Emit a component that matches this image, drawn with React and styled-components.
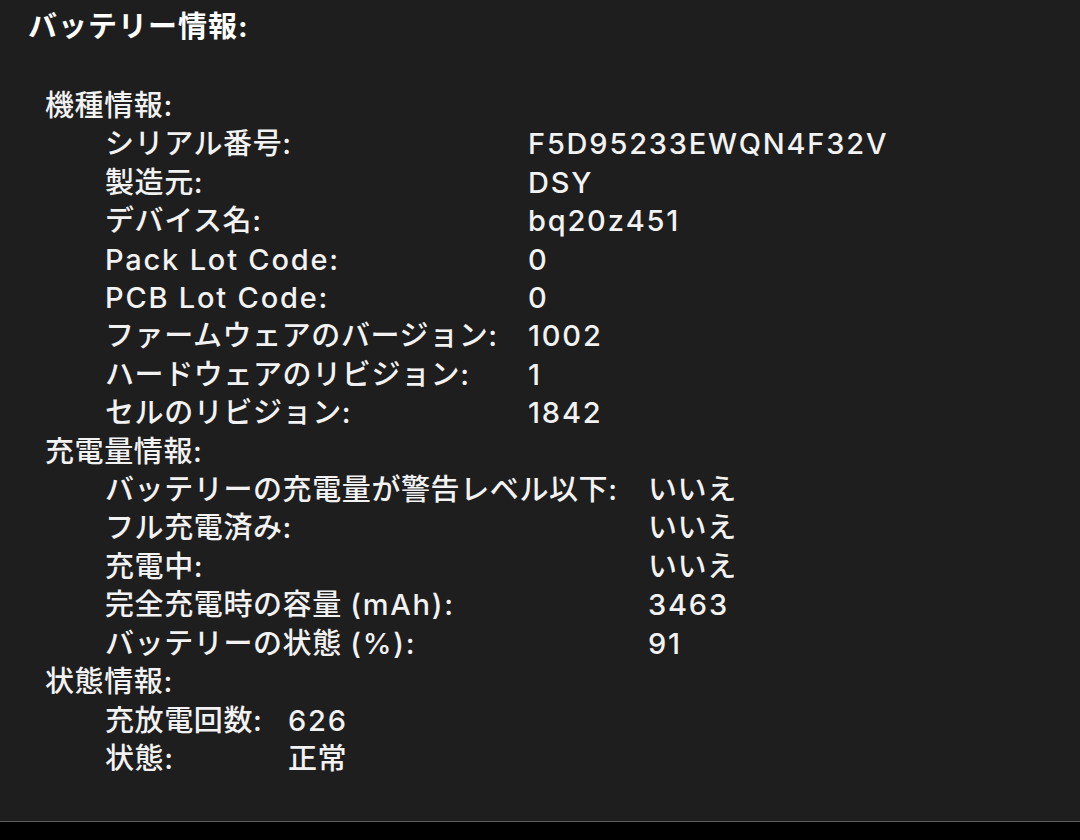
import React from "react";
import styled, { createGlobalStyle } from "styled-components";

const GlobalStyle = createGlobalStyle`
  html, body {
    margin: 0;
    padding: 0;
    background: #1e1e1e;
  }
  body {
    font-family: Inter, "Noto Sans CJK JP", sans-serif;
    color: #f2f2f2;
  }
`;

const sections = [
  {
    title: "機種情報:",
    labelWidth: 423,
    rows: [
      ["シリアル番号:", "F5D95233EWQN4F32V"],
      ["製造元:", "DSY"],
      ["デバイス名:", "bq20z451"],
      ["Pack Lot Code:", "0"],
      ["PCB Lot Code:", "0"],
      ["ファームウェアのバージョン:", "1002"],
      ["ハードウェアのリビジョン:", "1"],
      ["セルのリビジョン:", "1842"],
    ],
  },
  {
    title: "充電量情報:",
    labelWidth: 543,
    rows: [
      ["バッテリーの充電量が警告レベル以下:", "いいえ"],
      ["フル充電済み:", "いいえ"],
      ["充電中:", "いいえ"],
      ["完全充電時の容量 (mAh):", "3463"],
      ["バッテリーの状態 (%):", "91"],
    ],
  },
  {
    title: "状態情報:",
    labelWidth: 183,
    rows: [
      ["充放電回数:", "626"],
      ["状態:", "正常"],
    ],
  },
];

const Screen = styled.div`
  width: 1080px;
  height: 840px;
  display: flex;
  flex-direction: column;
  overflow: hidden;
`;

const Panel = styled.main`
  flex: 1;
  padding: 8px 0 0 28px;
  background: #1e1e1e;
  border-bottom: 1px solid #5c5c5c;
`;

const BottomBar = styled.div`
  height: 18px;
  background: #000;
`;

const Title = styled.h1`
  margin: 0 0 41px;
  font-size: 29px;
  line-height: 38px;
  font-weight: 700;
  letter-spacing: 1px;
  color: #fff;
`;

const Section = styled.section`
  margin-left: 17px;
`;

const SectionTitle = styled.div`
  font-size: 29px;
  line-height: 38.4px;
  font-weight: 500;
  letter-spacing: 0.6px;
`;

const Rows = styled.div`
  display: grid;
  grid-template-columns: ${({ $labelWidth }) => $labelWidth}px auto;
  justify-content: start;
  padding-left: 60px;
  font-size: 29px;
  line-height: 38.4px;
  font-weight: 500;
`;

const Cell = styled.div`
  white-space: nowrap;
  letter-spacing: 0.6px;
`;

const LatinRun = styled.span`
  letter-spacing: 1.8px;
`;

// wrap runs of ascii text so they get the wider tracking of the original font
const Text = ({ children }) =>
  children
    .split(/([\x21-\x7e](?:[\x20-\x7e]*[\x21-\x7e])?)/)
    .map((part, i) =>
      i % 2 ? <LatinRun key={i}>{part}</LatinRun> : part
    );

const App = () => {
  return (
    <>
      <GlobalStyle />
      <Screen>
        <Panel>
          <Title>バッテリー情報:</Title>
          {sections.map((section) => (
            <Section key={section.title}>
              <SectionTitle>{section.title}</SectionTitle>
              <Rows $labelWidth={section.labelWidth}>
                {section.rows.map(([label, value]) => (
                  <React.Fragment key={label}>
                    <Cell>
                      <Text>{label}</Text>
                    </Cell>
                    <Cell>
                      <Text>{value}</Text>
                    </Cell>
                  </React.Fragment>
                ))}
              </Rows>
            </Section>
          ))}
        </Panel>
        <BottomBar />
      </Screen>
    </>
  );
};

export default App;
